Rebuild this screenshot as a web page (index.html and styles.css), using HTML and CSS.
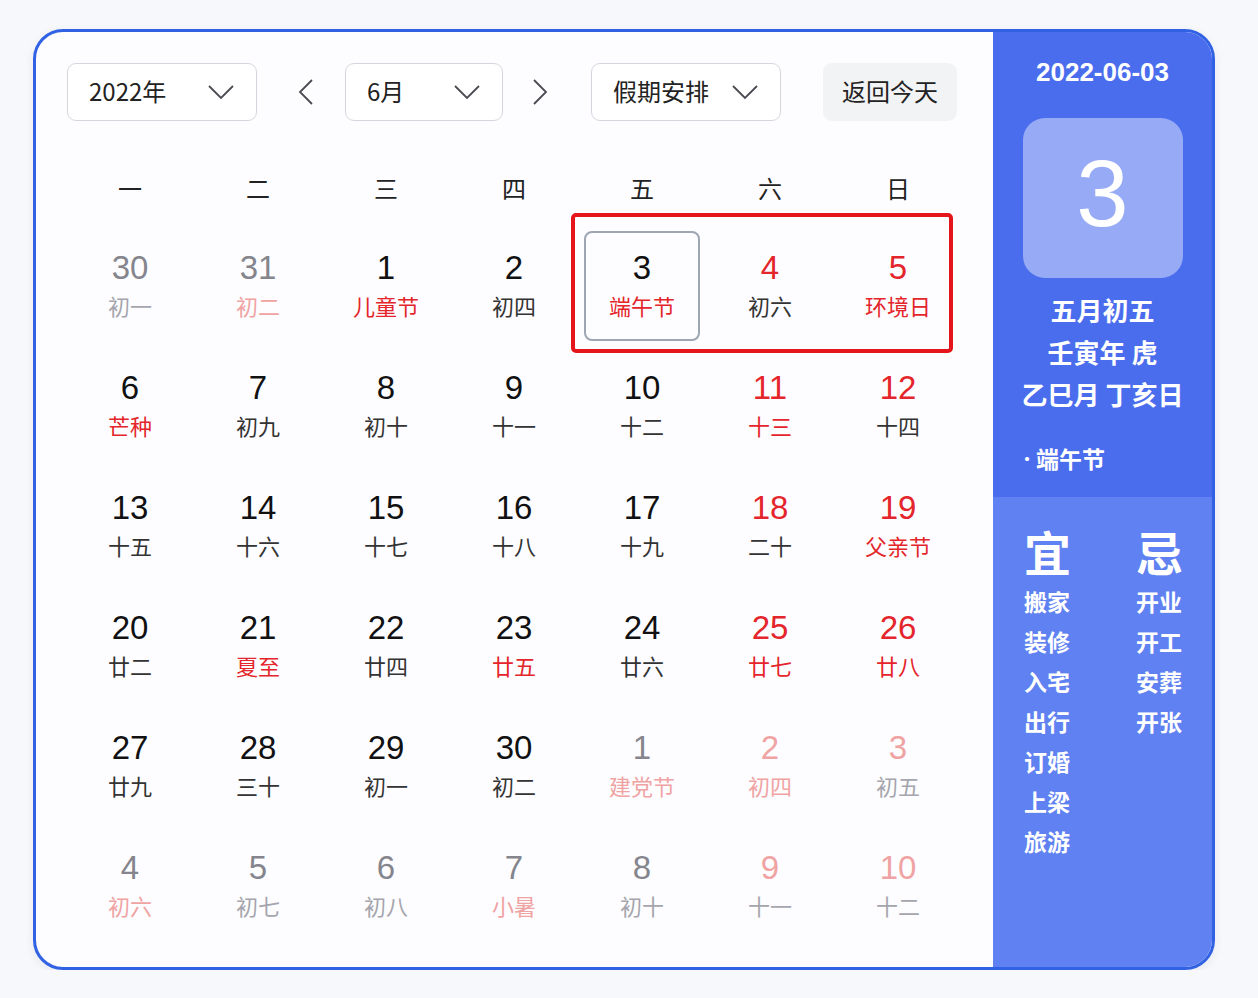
FILE: index.html
```html
<!DOCTYPE html>
<html lang="zh-CN">
<head>
<meta charset="utf-8">
<title>万年历</title>
<link rel="stylesheet" href="styles.css">
</head>
<body>
<div class="card">
  <main class="main">
    <div class="toolbar">
      <div class="select year"><span>2022年</span><svg class="chev" viewBox="0 0 28 16"><polyline points="2,2 14,14 26,2"/></svg></div>
      <div class="arrow prev"><svg viewBox="0 0 15 26"><polyline points="14,1 2,13 14,25"/></svg></div>
      <div class="select month"><span>6月</span><svg class="chev" viewBox="0 0 28 16"><polyline points="2,2 14,14 26,2"/></svg></div>
      <div class="arrow next"><svg viewBox="0 0 15 26"><polyline points="1,1 13,13 1,25"/></svg></div>
      <div class="select holiday"><span>假期安排</span><svg class="chev" viewBox="0 0 28 16"><polyline points="2,2 14,14 26,2"/></svg></div>
      <div class="today">返回今天</div>
    </div>
    <div class="grid">
      <div class="wk">一</div><div class="wk">二</div><div class="wk">三</div><div class="wk">四</div><div class="wk">五</div><div class="wk">六</div><div class="wk">日</div>

      <div class="d out"><span class="n">30</span><span class="l">初一</span></div>
      <div class="d out"><span class="n">31</span><span class="l red">初二</span></div>
      <div class="d"><span class="n">1</span><span class="l red">儿童节</span></div>
      <div class="d"><span class="n">2</span><span class="l">初四</span></div>
      <div class="d sel"><span class="n">3</span><span class="l red">端午节</span></div>
      <div class="d"><span class="n red">4</span><span class="l">初六</span></div>
      <div class="d"><span class="n red">5</span><span class="l red">环境日</span></div>

      <div class="d"><span class="n">6</span><span class="l red">芒种</span></div>
      <div class="d"><span class="n">7</span><span class="l">初九</span></div>
      <div class="d"><span class="n">8</span><span class="l">初十</span></div>
      <div class="d"><span class="n">9</span><span class="l">十一</span></div>
      <div class="d"><span class="n">10</span><span class="l">十二</span></div>
      <div class="d"><span class="n red">11</span><span class="l red">十三</span></div>
      <div class="d"><span class="n red">12</span><span class="l">十四</span></div>

      <div class="d"><span class="n">13</span><span class="l">十五</span></div>
      <div class="d"><span class="n">14</span><span class="l">十六</span></div>
      <div class="d"><span class="n">15</span><span class="l">十七</span></div>
      <div class="d"><span class="n">16</span><span class="l">十八</span></div>
      <div class="d"><span class="n">17</span><span class="l">十九</span></div>
      <div class="d"><span class="n red">18</span><span class="l">二十</span></div>
      <div class="d"><span class="n red">19</span><span class="l red">父亲节</span></div>

      <div class="d"><span class="n">20</span><span class="l">廿二</span></div>
      <div class="d"><span class="n">21</span><span class="l red">夏至</span></div>
      <div class="d"><span class="n">22</span><span class="l">廿四</span></div>
      <div class="d"><span class="n">23</span><span class="l red">廿五</span></div>
      <div class="d"><span class="n">24</span><span class="l">廿六</span></div>
      <div class="d"><span class="n red">25</span><span class="l red">廿七</span></div>
      <div class="d"><span class="n red">26</span><span class="l red">廿八</span></div>

      <div class="d"><span class="n">27</span><span class="l">廿九</span></div>
      <div class="d"><span class="n">28</span><span class="l">三十</span></div>
      <div class="d"><span class="n">29</span><span class="l">初一</span></div>
      <div class="d"><span class="n">30</span><span class="l">初二</span></div>
      <div class="d out"><span class="n">1</span><span class="l red">建党节</span></div>
      <div class="d out"><span class="n red">2</span><span class="l red">初四</span></div>
      <div class="d out"><span class="n red">3</span><span class="l">初五</span></div>

      <div class="d out"><span class="n">4</span><span class="l red">初六</span></div>
      <div class="d out"><span class="n">5</span><span class="l">初七</span></div>
      <div class="d out"><span class="n">6</span><span class="l">初八</span></div>
      <div class="d out"><span class="n">7</span><span class="l red">小暑</span></div>
      <div class="d out"><span class="n">8</span><span class="l">初十</span></div>
      <div class="d out"><span class="n red">9</span><span class="l">十一</span></div>
      <div class="d out"><span class="n red">10</span><span class="l">十二</span></div>

      <div class="mark"></div>
    </div>
  </main>
  <aside class="panel">
    <section class="info">
      <div class="date">2022-06-03</div>
      <div class="bigday">3</div>
      <div class="lunar-lines">
        <div>五月初五</div>
        <div>壬寅年 虎</div>
        <div>乙巳月 丁亥日</div>
      </div>
      <div class="fest"><span class="dot">•</span>端午节</div>
    </section>
    <section class="yiji">
      <div class="col">
        <div class="head">宜</div>
        <div>搬家</div><div>装修</div><div>入宅</div><div>出行</div><div>订婚</div><div>上梁</div><div>旅游</div>
      </div>
      <div class="col">
        <div class="head">忌</div>
        <div>开业</div><div>开工</div><div>安葬</div><div>开张</div>
      </div>
    </section>
  </aside>
</div>
</body>
</html>
```

FILE: styles.css
```css
* { box-sizing: border-box; }

body {
  margin: 0;
  background: #f7f8fb;
  font-family: "Noto Sans CJK SC", "Noto Sans", sans-serif;
  color: #222;
}

.card {
  margin: 29px 0 0 33px;
  width: 1182px;
  height: 941px;
  border: 3px solid #3162e4;
  border-radius: 30px;
  overflow: hidden;
  display: flex;
  background: #fdfdff;
  box-shadow: 0 3px 10px rgba(40, 60, 120, 0.08);
}

.main {
  flex: none;
  width: 957px;
  padding: 31px 0 0 31px;
}

.toolbar {
  display: flex;
  align-items: center;
  height: 58px;
}

.select {
  height: 58px;
  border: 1px solid #d3d6dd;
  border-radius: 9px;
  display: flex;
  align-items: center;
  justify-content: space-between;
  padding: 0 21px 3px 21px;
  font-size: 24px;
  color: #222;
  background: #fff;
}
.select .chev { margin-top: 3px; }
.select.year { width: 190px; }
.select.month { width: 158px; }
.select.holiday { width: 190px; }

.chev {
  width: 28px;
  height: 16px;
  fill: none;
  stroke: #4a4a52;
  stroke-width: 1.8;
}

.arrow { width: 15px; height: 26px; display: flex; }
.arrow svg { width: 15px; height: 26px; fill: none; stroke: #4a4a52; stroke-width: 1.8; }
.arrow.prev { margin: 0 32px 0 41px; }
.arrow.next { margin: 0 43px 0 30px; }

.today {
  margin-left: 42px;
  width: 134px;
  height: 58px;
  border-radius: 9px;
  background: #f2f3f5;
  display: flex;
  align-items: center;
  justify-content: center;
  padding-bottom: 3px;
  font-size: 24px;
  color: #222;
}

.grid {
  position: relative;
  margin-top: 51px;
  display: grid;
  grid-template-columns: repeat(7, 128px);
  grid-template-rows: 54px;
  grid-auto-rows: 120px;
  margin-left: -1px;
}

.wk {
  font-size: 24px;
  line-height: 32px;
  text-align: center;
  color: #222;
}

.d {
  display: flex;
  flex-direction: column;
  align-items: center;
  justify-content: center;
}
.d .n {
  font-family: "Liberation Sans", Arial, sans-serif;
  font-size: 33px;
  line-height: 38px;
  color: #111;
}
.d .l {
  font-size: 22px;
  line-height: 36px;
  color: #333;
}
.d .red { color: #e4252b; }

.d.out .n { color: #85858d; }
.d.out .l { color: #a5a5ad; }
.d.out .red { color: #f0a3a3; }

.d.sel {
  margin: 5px 6px;
  border: 2px solid #9ea6b3;
  border-radius: 8px;
}

.mark {
  position: absolute;
  left: 505px;
  top: 41px;
  width: 382px;
  height: 140px;
  border: 4px solid #e4161c;
  border-radius: 5px;
  pointer-events: none;
}

.panel {
  flex: none;
  width: 219px;
  display: flex;
  flex-direction: column;
  color: #fff;
}

.info {
  height: 465px;
  background: #4a6dee;
  display: flex;
  flex-direction: column;
  align-items: center;
  padding-top: 24px;
}

.date {
  font-family: "Liberation Sans", Arial, sans-serif;
  font-weight: 700;
  font-size: 26px;
  line-height: 32px;
}

.bigday {
  margin-top: 30px;
  width: 160px;
  height: 160px;
  border-radius: 22px;
  background: rgba(255, 255, 255, 0.42);
  display: flex;
  align-items: center;
  justify-content: center;
  font-family: "Liberation Sans", Arial, sans-serif;
  font-size: 94px;
  padding-bottom: 8px;
}

.lunar-lines {
  margin-top: 11px;
  text-align: center;
  font-size: 26px;
  line-height: 42px;
  font-weight: 700;
}

.fest {
  align-self: flex-start;
  margin: 30px 0 0 26px;
  font-size: 23px;
  line-height: 26px;
  font-weight: 700;
}
.fest .dot { font-size: 16px; margin-right: 1px; vertical-align: 3px; }

.yiji {
  flex: 1;
  background: #5f81f1;
  display: grid;
  grid-template-columns: 112px auto;
  padding: 28px 0 0 31px;
  align-content: start;
}

.col div {
  font-size: 23px;
  line-height: 40px;
  font-weight: 700;
}
.col .head {
  font-size: 47px;
  line-height: 52px;
  margin-bottom: 4px;
}
```
